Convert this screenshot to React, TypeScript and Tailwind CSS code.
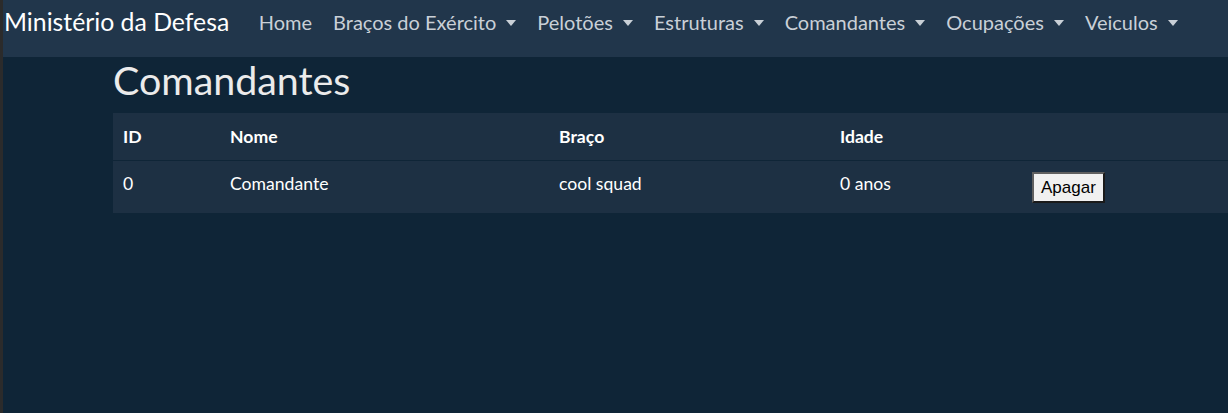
export default function App() {
  const links = [
    { label: "Home", caret: false },
    { label: "Braços do Exército", caret: true },
    { label: "Pelotões", caret: true },
    { label: "Estruturas", caret: true },
    { label: "Comandantes", caret: true },
    { label: "Ocupações", caret: true },
    { label: "Veiculos", caret: true },
  ];

  const rows = [{ id: 0, nome: "Comandante", braco: "cool squad", idade: 0 }];

  return (
    <div className="flex h-[413px] w-[1228px] overflow-hidden bg-[#0f2537] font-['Lato','Noto_Sans',sans-serif]">
      <div className="w-[3px] shrink-0 bg-[#2b2b2b]" />
      <div className="flex min-w-0 flex-1 flex-col">
        <nav className="h-[57px] shrink-0 bg-[#21364b]">
          <div className="flex h-[44px] items-center pl-[1px]">
            <span className="mr-[19px] text-[24.8px] leading-[36px] text-white">Ministério da Defesa</span>
            {links.map((link) => (
              <span
                key={link.label}
                className="flex items-center px-[10.5px] text-[20px] leading-[29px] text-[#c9d0d7]"
              >
                {link.label}
                {link.caret && (
                  <span className="ml-[10px] mt-[1px] inline-block h-0 w-0 border-x-[5.5px] border-t-[6px] border-x-transparent border-t-[#c9d0d7]" />
                )}
              </span>
            ))}
          </div>
        </nav>

        <main className="pl-[110px]">
          <h2 className="mb-[10px] text-[39.4px] leading-[46px] text-[#ebebeb]">Comandantes</h2>
          <table className="w-[1120px] border-collapse bg-[#1d3043] text-left text-[17.6px] leading-[26px] text-white">
            <thead>
              <tr className="border-b border-[#0f2537]">
                <th className="w-[107px] px-[10px] pb-[10px] pt-[11px] font-bold">ID</th>
                <th className="w-[329px] px-[10px] pb-[10px] pt-[11px] font-bold">Nome</th>
                <th className="w-[281px] px-[10px] pb-[10px] pt-[11px] font-bold">Braço</th>
                <th className="w-[192px] px-[10px] pb-[10px] pt-[11px] font-bold">Idade</th>
                <th className="px-[10px] pb-[10px] pt-[11px]" />
              </tr>
            </thead>
            <tbody>
              {rows.map((row) => (
                <tr key={row.id}>
                  <td className="px-[10px] pb-[16px] pt-[10px] align-top">{row.id}</td>
                  <td className="px-[10px] pb-[16px] pt-[10px] align-top">{row.nome}</td>
                  <td className="px-[10px] pb-[16px] pt-[10px] align-top">{row.braco}</td>
                  <td className="px-[10px] pb-[16px] pt-[10px] align-top">{row.idade} anos</td>
                  <td className="px-[10px] pb-[10px] pt-[11px] align-top">
                    <button className="border-2 border-b-[#1a1a1a] border-l-[#5f5f5f] border-r-[#1a1a1a] border-t-[#5f5f5f] bg-[#f0f0f0] px-[7px] font-['Liberation_Sans',Arial,sans-serif] text-[17px] leading-[27px] text-black">
                      Apagar
                    </button>
                  </td>
                </tr>
              ))}
            </tbody>
          </table>
        </main>
      </div>
    </div>
  );
}
